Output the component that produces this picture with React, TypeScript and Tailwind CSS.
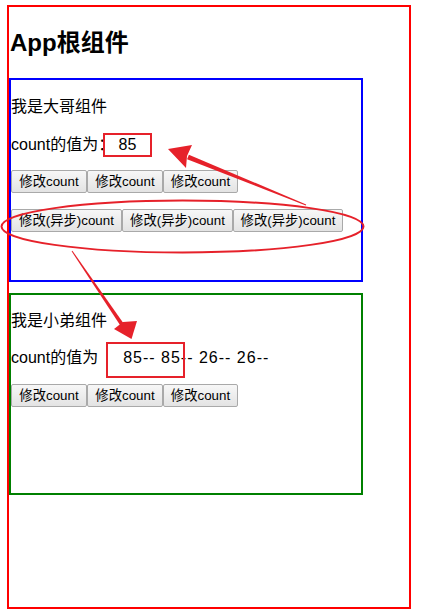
import React from "react";

const font = { fontFamily: '"Liberation Sans", "Noto Sans CJK SC", sans-serif' };

function Btn({ label, w }: { label: string; w: string }) {
  return (
    <button
      className={`${w} h-[23px] shrink-0 border border-[#a9a9a9] bg-gradient-to-b from-[#f7f7f7] to-[#e3e3e3] text-[13.33px] leading-[21px] text-black rounded-[2px] p-0`}
      style={font}
    >
      {label}
    </button>
  );
}

export default function App() {
  const red = "#e6212a";
  return (
    <div className="relative w-[431px] h-[615px] bg-white pt-[5px] pl-[7px] text-black" style={font}>
      <div className="w-[404px] h-[604px] border-2 border-[#ff0000]">
        <h2 className="mt-[22px] mb-[21px] h-[28px] leading-[28px] text-[24px] font-bold pl-px">App根组件</h2>

        <div className="w-[354px] h-[204px] border-2 border-[#0000ff] pt-[17px]">
          <p className="h-[20px] leading-[20px] text-[16px]">我是大哥组件</p>
          <p className="mt-[18px] h-[20px] leading-[20px] text-[16px]">count的值为： 85</p>
          <div className="mt-[15px] flex">
            <Btn label="修改count" w="w-[76px]" />
            <Btn label="修改count" w="w-[76px]" />
            <Btn label="修改count" w="w-[75px]" />
          </div>
          <div className="mt-[16px] flex">
            <Btn label="修改(异步)count" w="w-[111px]" />
            <Btn label="修改(异步)count" w="w-[111px]" />
            <Btn label="修改(异步)count" w="w-[110px]" />
          </div>
        </div>

        <div className="mt-[11px] w-[354px] h-[202px] border-2 border-[#008000] pt-[16px]">
          <p className="h-[20px] leading-[20px] text-[16px]">我是小弟组件</p>
          <p className="mt-[17px] h-[20px] leading-[20px] text-[16px] flex">
            <span>count的值为</span>
            <span className="ml-[25px] tracking-[1px] whitespace-pre">85-- 85-- 26-- 26--</span>
          </p>
          <div className="mt-[16px] flex">
            <Btn label="修改count" w="w-[76px]" />
            <Btn label="修改count" w="w-[76px]" />
            <Btn label="修改count" w="w-[75px]" />
          </div>
        </div>
      </div>

      <svg className="absolute inset-0 pointer-events-none" width="431" height="615" viewBox="0 0 431 615">
        <rect x="104" y="134" width="47" height="22" fill="none" stroke={red} strokeWidth="2" />
        <rect x="107" y="343" width="77" height="34" fill="none" stroke={red} strokeWidth="2" />
        <ellipse cx="182.5" cy="226.5" rx="181" ry="26" fill="none" stroke={red} strokeWidth="2" />
        {/* arrow 1 */}
        <polygon points="306.2,204.5 305.8,205.5 187.1,159.3 188.9,154.7" fill={red} />
        <polygon points="168,149 192,145 187,156 186,168" fill={red} />
        {/* arrow 2 */}
        <polygon points="71.6,251.3 72.4,250.7 124.7,324.9 121.3,327.1" fill={red} />
        <polygon points="131.5,339 114,329 123,322 137,321" fill={red} />
      </svg>
    </div>
  );
}
